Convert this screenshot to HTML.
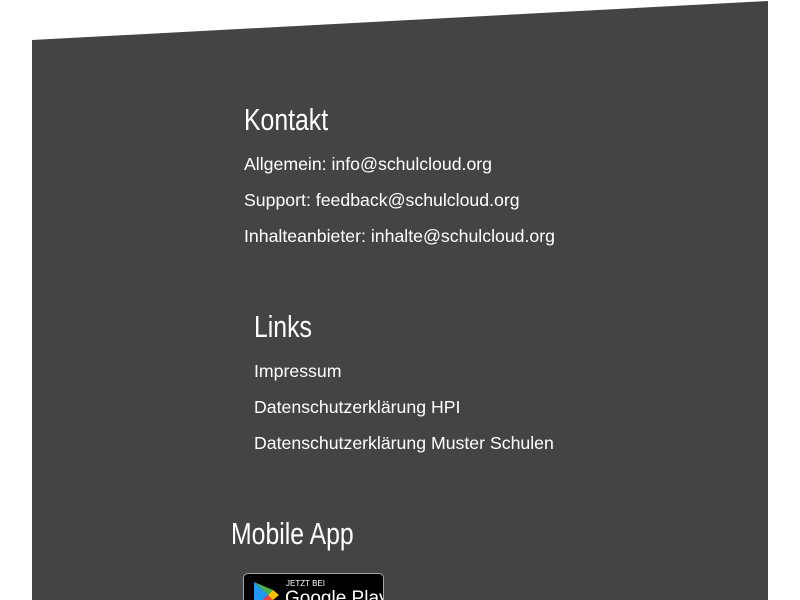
<!DOCTYPE html>
<html style="overflow:hidden"><head><style>
html,body{margin:0;width:800px;height:600px;overflow:hidden}
body{background:#fff;font-family:"Liberation Sans",sans-serif;color:#fff;position:relative}
svg.bg{position:absolute;left:0;top:0}
.t{position:absolute;white-space:nowrap}
h2{position:absolute;margin:0;font-family:"Liberation Sans",sans-serif;font-weight:normal;font-size:31px;white-space:nowrap;transform:scaleX(0.8);transform-origin:left}
.l{position:absolute;white-space:nowrap;font-family:"Liberation Sans",sans-serif;font-size:17.7px}
.badge{position:absolute;left:243px;top:573px;width:139px;height:26px;overflow:hidden;background:#000;border:1px solid #a6a6a6;border-bottom:none;border-radius:5px 5px 0 0}
</style></head><body>
<svg class="bg" width="800" height="600"><polygon points="32,40 768,1 768,600 32,600" fill="#444"/></svg>
<h2 style="left:244px;top:102px">Kontakt</h2>
<div class="l" style="left:244px;top:154px">Allgemein: info@schulcloud.org</div>
<div class="l" style="left:244px;top:190px">Support: feedback@schulcloud.org</div>
<div class="l" style="left:244px;top:226px">Inhalteanbieter: inhalte@schulcloud.org</div>
<h2 style="left:254px;top:309px">Links</h2>
<div class="l" style="left:254px;top:361px">Impressum</div>
<div class="l" style="left:254px;top:397px">Datenschutzerklärung HPI</div>
<div class="l" style="left:254px;top:433px">Datenschutzerklärung Muster Schulen</div>
<h2 style="left:231px;top:516px">Mobile App</h2>
<div class="badge">
<svg width="30" height="30" style="position:absolute;left:8px;top:6px" viewBox="0 0 30 30">
<polygon points="2,2 16,15 2,28" fill="#2196f3"/>
<polygon points="2,2 16,15 21,10" fill="#4caf50"/>
<polygon points="2,28 16,15 21,20" fill="#f44336"/>
<polygon points="16,15 21,10 27,15 21,20" fill="#ffc107"/>
</svg>
<div class="t" style="left:42px;top:5px;font-size:8px">JETZT BEI</div>
<div class="t" style="left:41px;top:14px;font-size:19px">Google Play</div>
</div>
</body></html>
